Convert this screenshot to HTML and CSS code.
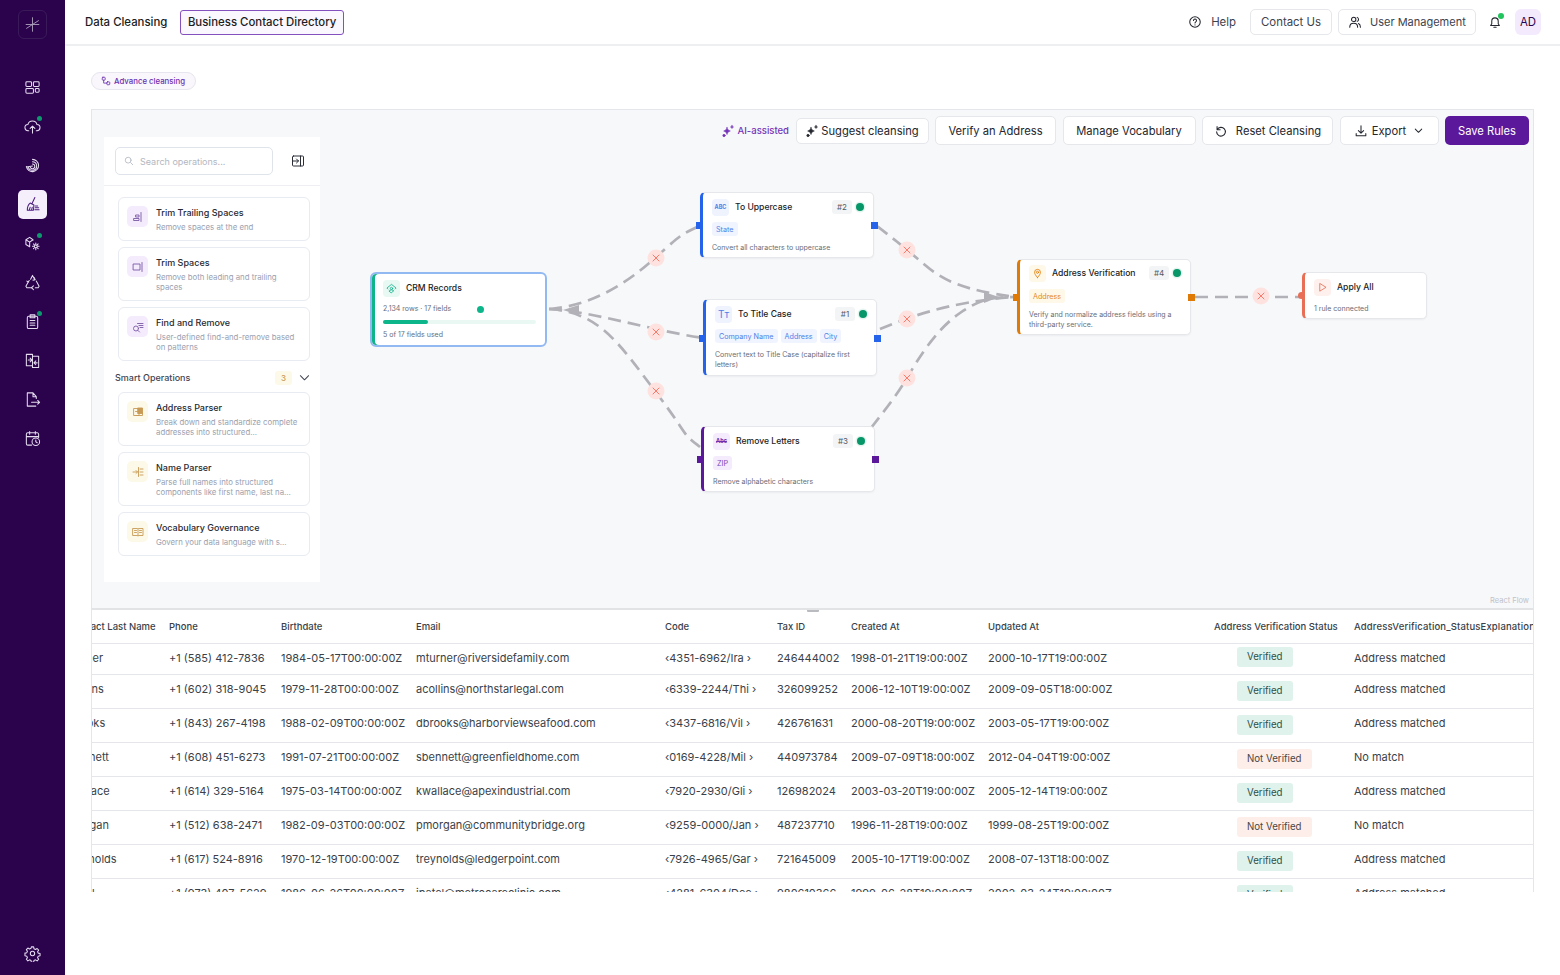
FILE: index.html
```html
<!DOCTYPE html>
<html lang="en">
<head>
    <meta charset="UTF-8">
    <title>Data Cleansing</title>
    <link rel="stylesheet" href="styles.css">
</head>
<body>
    <aside class="sidebar">
        <div class="logo">
            <svg viewBox="0 0 20 20" class="ico-logo"><path d="M10 2v16M3 14.5 17 5.500M2.500 10h15"/></svg>
        </div>
        <nav class="side-nav">
            <a class="side-item"><svg viewBox="0 0 18 18"><rect x="2" y="3" width="6" height="5" rx="1"/><rect x="10" y="3" width="6" height="5" rx="1"/><rect x="2" y="10" width="8" height="5" rx="1"/><rect x="12" y="10" width="4" height="4" rx="1"/></svg></a>
            <a class="side-item dot"><svg viewBox="0 0 18 18"><path d="M5 13.500H4.500a3.300 3.300 0 0 1-.4-6.600 5 5 0 0 1 9.700 0 3.300 3.300 0 0 1-.3 6.600H13"/><path d="M9 16V9M6.500 11 9 8.500l2.500 2.500"/></svg></a>
            <a class="side-item"><svg viewBox="0 0 18 18"><path d="M9 2.500a6.500 6.500 0 1 1-6.500 7.500M9 5a4.500 4.500 0 1 1-4.500 5.500M9 7.500a2.500 2.500 0 1 1-2.500 3M2.500 10.500 9 9.500"/></svg></a>
            <a class="side-item active"><svg viewBox="0 0 18 18"><path d="M11.500 1.500 8.500 8M6.500 7.500l4 2-.5 5.500H3.500c0-3 1-6 3-7.500zM5.500 15l1-3M8 15l.7-3M12 10.500h2.500M12 12.500h3.500M11.500 14.500H16"/></svg></a>
            <a class="side-item dot"><svg viewBox="0 0 18 18"><path d="M9.500 5.500V5L6 2.500 2 5v5l4 2.500M2 5l4 2.500L9.500 5M6 7.500v5"/><circle cx="12.500" cy="12" r="1.500"/><path d="M12.500 8.500v1.500M12.500 14v1.500M9 12h1.500M14.500 12H16M10 9.500l1 1M14 13.500l1 1M10 14.500l1-1M14 10.500l1-1"/></svg></a>
            <a class="side-item"><svg viewBox="0 0 18 18"><path d="M7 5.500 9 1.500l2.500 4.500M13 7.500l3 5.500-1 1.500h-3M8 14.500H3l-1-1.500 2.500-4.500"/><path d="m10 12.500-2 2 2 2M11 4l.7 2.200-2.200.3M3 7.500l1.500 1 1-1.700"/></svg></a>
            <a class="side-item dot"><svg viewBox="0 0 18 18"><rect x="3.500" y="3.500" width="11" height="13" rx="1.500"/><path d="M6.500 2h5v3h-5zM6.500 8h5M6.500 10.500h5M6.500 13h5"/></svg></a>
            <a class="side-item"><svg viewBox="0 0 18 18"><path d="M9 14.500H2.500v-12H9zM9 4.500h6.500v12H9zM4.500 8.500H8M6.500 6.500l2 2-2 2M14 11.500h-3.500M12.500 9.500l-2 2 2 2"/></svg></a>
            <a class="side-item"><svg viewBox="0 0 18 18"><path d="M13 8V6L9.500 2h-6v14h9M9.500 2v4H13M8 12h8.500M14.500 10l2 2-2 2"/></svg></a>
            <a class="side-item"><svg viewBox="0 0 18 18"><path d="M8 16H4a1.500 1.500 0 0 1-1.500-1.500v-10A1.500 1.500 0 0 1 4 3h10a1.500 1.500 0 0 1 1.500 1.500V8M6 1.500v3M12 1.500v3M2.500 7h13"/><circle cx="12.500" cy="12.500" r="4"/><path d="M12.500 10.500v2l1.500 1"/></svg></a>
        </nav>
        <a class="side-item gear"><svg viewBox="0 0 18 18"><circle cx="9" cy="9" r="2.300"/><path d="M7.800 2h2.400l.4 2 1.500.7 1.800-1 1.600 1.700-1.100 1.700.6 1.500 2 .5v2.400l-2 .4-.6 1.500 1.100 1.700-1.600 1.700-1.800-1.100-1.500.6-.4 2H7.800l-.4-2-1.500-.6-1.800 1.100-1.600-1.700 1.100-1.700-.6-1.500-2-.4V8.600l2-.5.6-1.500-1.100-1.700 1.600-1.700 1.800 1 1.500-.7z"/></svg></a>
    </aside>

    <div class="main">
        <header class="topbar">
            <span class="page-title">Data Cleansing</span>
            <span class="dataset-tag">Business Contact Directory</span>
            <div class="top-actions">
                <span class="help">
                    <svg viewBox="0 0 16 16" class="ico"><circle cx="8" cy="8" r="6"/><path d="M6.300 6.300a1.700 1.700 0 1 1 2.600 1.500c-.6.400-.9.700-.9 1.400M8 11.300v.2"/></svg>
                    Help
                </span>
                <span class="top-btn contact">Contact Us</span>
                <span class="top-btn users">
                    <svg viewBox="0 0 16 16" class="ico"><circle cx="6.500" cy="5" r="2.500"/><path d="M2 14c0-2.700 1.800-4.500 4.500-4.500S11 11.300 11 14M10.500 2.700a2.500 2.500 0 0 1 0 4.600M12 9.800c1.400.6 2.200 2.100 2.200 4.200"/></svg>
                    User Management
                </span>
                <span class="bell">
                    <svg viewBox="0 0 16 16" class="ico"><path d="M3 12h10l-1.300-2V7a3.700 3.700 0 0 0-7.400 0v3zM6.700 14h2.600"/></svg>
                </span>
                <span class="avatar">AD</span>
            </div>
        </header>

        <div class="content">
            <span class="mode-pill">
                <svg viewBox="0 0 12 12"><rect x="1.500" y="1.500" width="3.500" height="3.500" rx=".8"/><rect x="7" y="7" width="3.500" height="3.500" rx=".8"/><path d="M3.200 5v3.500H7"/></svg>
                Advance cleansing
            </span>

            <section class="canvas">
                <svg class="edges" viewBox="92 110 1441 497">
                    <g class="edge-lines">
                        <path d="M549 309C590 306 625 285 655 258S680 236 699 226"/>
                        <path d="M549 309C590 311 650 330 703 338"/>
                        <path d="M549 309C600 312 620 345 655 391S680 432 700 447"/>
                        <path d="M877 226C895 240 905 248 925 265S965 290 1015 297"/>
                        <path d="M880 329C905 319 945 302 1015 297"/>
                        <path d="M871 428C885 410 897 395 907 378S935 330 960 313 995 298 1015 297"/>
                        <path d="M1195 297H1302"/>
                    </g>
                    <polygon class="wedge" points="563,310 579,305 579,315"/>
                    <polygon class="wedge" points="999,297 984,292 984,303"/>
                    <g class="edge-x" transform="translate(656 258)"><circle r="8.500"/><path d="M-3-3 3 3M3-3-3 3"/></g>
                    <g class="edge-x" transform="translate(656 332)"><circle r="8.500"/><path d="M-3-3 3 3M3-3-3 3"/></g>
                    <g class="edge-x" transform="translate(656 391)"><circle r="8.500"/><path d="M-3-3 3 3M3-3-3 3"/></g>
                    <g class="edge-x" transform="translate(907 250)"><circle r="8.500"/><path d="M-3-3 3 3M3-3-3 3"/></g>
                    <g class="edge-x" transform="translate(907 319)"><circle r="8.500"/><path d="M-3-3 3 3M3-3-3 3"/></g>
                    <g class="edge-x" transform="translate(907 378)"><circle r="8.500"/><path d="M-3-3 3 3M3-3-3 3"/></g>
                    <g class="edge-x" transform="translate(1261 296)"><circle r="8.500"/><path d="M-3-3 3 3M3-3-3 3"/></g>
                </svg>

                <div class="toolbar">
                    <span class="ai-label">
                        <svg viewBox="0 0 14 14" class="spark"><path d="M6 3.500c.4 2 1.300 3 3.300 3.500-2 .4-2.900 1.500-3.300 3.500-.4-2-1.300-3.100-3.300-3.500 2-.5 2.900-1.500 3.300-3.500zM11 1.500c.2.900.6 1.300 1.500 1.500-.9.200-1.300.6-1.500 1.500-.2-.9-.6-1.300-1.500-1.500.9-.2 1.300-.6 1.500-1.500z"/><circle cx="3" cy="11.500" r="1.200"/></svg>
                        AI-assisted
                    </span>
                    <button class="tool-btn suggest">
                        <svg viewBox="0 0 14 14" class="spark dark"><path d="M6 3.500c.4 2 1.300 3 3.300 3.500-2 .4-2.900 1.500-3.300 3.500-.4-2-1.300-3.100-3.300-3.500 2-.5 2.900-1.500 3.300-3.500zM11 1.500c.2.900.6 1.300 1.500 1.500-.9.200-1.300.6-1.500 1.500-.2-.9-.6-1.300-1.500-1.500.9-.2 1.300-.6 1.500-1.500z"/><circle cx="3" cy="11.500" r="1.200"/></svg>
                        Suggest cleansing
                    </button>
                    <button class="tool-btn verify">Verify an Address</button>
                    <button class="tool-btn vocab">Manage Vocabulary</button>
                    <button class="tool-btn reset">
                        <svg viewBox="0 0 16 16" class="ico"><path d="M3.500 3v3.500H7M3.700 6.300A5 5 0 1 1 3 9"/></svg>
                        Reset Cleansing
                    </button>
                    <button class="tool-btn export">
                        <svg viewBox="0 0 16 16" class="ico"><path d="M8 2v8M5 7.500l3 3 3-3M2.500 11v2.500h11V11"/></svg>
                        Export
                        <svg viewBox="0 0 12 12" class="chev"><path d="m2.500 4.500 3.500 3.500 3.500-3.500"/></svg>
                    </button>
                    <button class="save-btn">Save Rules</button>
                </div>

                <div class="ops-panel">
                    <div class="ops-search">
                        <div class="search-box">
                            <svg viewBox="0 0 12 12"><circle cx="5" cy="5" r="3.500"/><path d="m8 8 2.500 2.500"/></svg>
                            <span>Search operations...</span>
                        </div>
                        <svg viewBox="0 0 14 14" class="collapse"><rect x="1.500" y="2" width="11" height="10" rx="1"/><path d="M9.500 2v10M1.500 7h6M5.500 5l2 2-2 2"/></svg>
                    </div>
                    <div class="ops-list">
                        <div class="op-card">
                            <span class="op-icon lilac"><svg viewBox="0 0 12 12"><path d="M9 1.500v9M2 7.500h5v2H2zM4 4h3v2H4z"/></svg></span>
                            <div class="op-text"><h4>Trim Trailing Spaces</h4><p>Remove spaces at the end</p></div>
                        </div>
                        <div class="op-card">
                            <span class="op-icon lilac"><svg viewBox="0 0 12 12"><rect x="1.500" y="3" width="6.500" height="6"/><path d="M10 1.500v9"/></svg></span>
                            <div class="op-text"><h4>Trim Spaces</h4><p>Remove both leading and trailing spaces</p></div>
                        </div>
                        <div class="op-card">
                            <span class="op-icon lilac"><svg viewBox="0 0 12 12"><circle cx="4" cy="7.500" r="2.500"/><path d="m6 9.500 1.500 1.500M5.500 2.500H11M7 4.500h4M8 6.500h3"/></svg></span>
                            <div class="op-text"><h4>Find and Remove</h4><p>User-defined find-and-remove based on patterns</p></div>
                        </div>
                        <div class="smart-head">
                            <span class="smart-title">Smart Operations</span>
                            <span class="smart-count">3</span>
                            <svg viewBox="0 0 12 12" class="chev"><path d="m1.500 4 4.500 4.500L10.500 4"/></svg>
                        </div>
                        <div class="op-card">
                            <span class="op-icon sand"><svg viewBox="0 0 12 12"><path d="M2 2.500h5v7H2z"/><path class="fill" d="M6 2h4.500v5.500H6z"/><path d="M3.500 5.500h2M4 9.500h6.500V7"/></svg></span>
                            <div class="op-text"><h4>Address Parser</h4><p>Break down and standardize complete addresses into structured...</p></div>
                        </div>
                        <div class="op-card">
                            <span class="op-icon sand"><svg viewBox="0 0 12 12"><path d="M1 6h4.500M4 4.500 5.500 6 4 7.500M6.500 1.500v9M8 3h3M8 6h3M8 9h3"/></svg></span>
                            <div class="op-text"><h4>Name Parser</h4><p>Parse full names into structured components like first name, last na...</p></div>
                        </div>
                        <div class="op-card">
                            <span class="op-icon sand"><svg viewBox="0 0 12 12"><path d="M1 2.500h4.500L6 3l.5-.5H11v7H6.500L6 10l-.5-.5H1zM6 3v7M2.500 4.500h2M2.500 6.500h2M7.500 4.500h2M7.500 6.500h2"/></svg></span>
                            <div class="op-text"><h4>Vocabulary Governance</h4><p>Govern your data language with s...</p></div>
                        </div>
                    </div>
                </div>

                <div class="node node-crm">
                    <div class="node-head">
                        <span class="node-icon mint"><svg viewBox="0 0 12 12"><path d="M2 6.500 1 5.500 6 1.500l5 4-1 1M3.500 8.500a3.500 3.500 0 0 1 5 0L6 10.500z"/><circle cx="6" cy="6" r="1.300"/></svg></span>
                        <span class="node-title">CRM Records</span>
                    </div>
                    <div class="crm-meta"><span>2,134 rows · 17 fields</span><i class="crm-dot"></i></div>
                    <div class="crm-bar"><i></i></div>
                    <p class="node-desc">5 of 17 fields used</p>
                </div>

                <div class="node node-upper blue">
                    <div class="node-head">
                        <span class="node-icon pale-blue glyph-abc">ABC</span>
                        <span class="node-title">To Uppercase</span>
                        <span class="node-num">#2</span>
                        <i class="status-dot"></i>
                    </div>
                    <div class="chips"><span class="chip chip-blue">State</span></div>
                    <p class="node-desc">Convert all characters to uppercase</p>
                    <i class="handle left"></i><i class="handle right"></i>
                </div>

                <div class="node node-title-case blue">
                    <div class="node-head">
                        <span class="node-icon pale-blue glyph-tt">Tт</span>
                        <span class="node-title">To Title Case</span>
                        <span class="node-num">#1</span>
                        <i class="status-dot"></i>
                    </div>
                    <div class="chips"><span class="chip chip-blue">Company Name</span><span class="chip chip-blue">Address</span><span class="chip chip-blue">City</span></div>
                    <p class="node-desc">Convert text to Title Case (capitalize first letters)</p>
                    <i class="handle left"></i><i class="handle right"></i>
                </div>

                <div class="node node-remove purple">
                    <div class="node-head">
                        <span class="node-icon pale-purple glyph-abc struck">Abc</span>
                        <span class="node-title">Remove Letters</span>
                        <span class="node-num">#3</span>
                        <i class="status-dot"></i>
                    </div>
                    <div class="chips"><span class="chip chip-purple">ZIP</span></div>
                    <p class="node-desc">Remove alphabetic characters</p>
                    <i class="handle left"></i><i class="handle right"></i>
                </div>

                <div class="node node-address orange">
                    <div class="node-head">
                        <span class="node-icon pale-sand"><svg viewBox="0 0 12 12"><path d="M6 10.500C4 8 2.800 6.500 2.800 4.700a3.200 3.200 0 0 1 6.400 0C9.200 6.500 8 8 6 10.500z"/><circle cx="6" cy="4.700" r="1.200"/></svg></span>
                        <span class="node-title">Address Verification</span>
                        <span class="node-num">#4</span>
                        <i class="status-dot"></i>
                    </div>
                    <div class="chips"><span class="chip chip-orange">Address</span></div>
                    <p class="node-desc">Verify and normalize address fields using a third-party service.</p>
                    <i class="handle left"></i><i class="handle right"></i>
                </div>

                <div class="node node-apply coral">
                    <div class="node-head">
                        <span class="node-icon pale-coral"><svg viewBox="0 0 12 12"><path d="M3 2v8l6.500-4z"/></svg></span>
                        <span class="node-title">Apply All</span>
                    </div>
                    <p class="node-desc">1 rule connected</p>
                    <i class="handle left round"></i>
                </div>

                <span class="attribution">React Flow</span>
            </section>

            <section class="table-wrap">
                <i class="grip"></i>
                <table class="data-table">
                    <colgroup>
                        <col class="c-name"><col class="c-phone"><col class="c-birth"><col class="c-email"><col class="c-code">
                        <col class="c-tax"><col class="c-created"><col class="c-updated"><col class="c-status"><col class="c-expl">
                    </colgroup>
                    <thead>
                        <tr><th>Contact Last Name</th><th>Phone</th><th>Birthdate</th><th>Email</th><th>Code</th><th>Tax ID</th><th>Created At</th><th>Updated At</th><th>Address Verification Status</th><th>AddressVerification_StatusExplanation</th></tr>
                    </thead>
                    <tbody>
                        <tr class="row-first"><td>Turner</td><td>+1 (585) 412-7836</td><td>1984-05-17T00:00:00Z</td><td>mturner@riversidefamily.com</td><td>‹4351-6962/Ira ›</td><td>246444002</td><td>1998-01-21T19:00:00Z</td><td>2000-10-17T19:00:00Z</td><td class="cell-status"><span class="badge ok">Verified</span></td><td>Address matched</td></tr>
                        <tr><td>Collins</td><td>+1 (602) 318-9045</td><td>1979-11-28T00:00:00Z</td><td>acollins@northstarlegal.com</td><td>‹6339-2244/Thi ›</td><td>326099252</td><td>2006-12-10T19:00:00Z</td><td>2009-09-05T18:00:00Z</td><td class="cell-status"><span class="badge ok">Verified</span></td><td>Address matched</td></tr>
                        <tr><td>Brooks</td><td>+1 (843) 267-4198</td><td>1988-02-09T00:00:00Z</td><td>dbrooks@harborviewseafood.com</td><td>‹3437-6816/Vil ›</td><td>426761631</td><td>2000-08-20T19:00:00Z</td><td>2003-05-17T19:00:00Z</td><td class="cell-status"><span class="badge ok">Verified</span></td><td>Address matched</td></tr>
                        <tr><td>Bennett</td><td>+1 (608) 451-6273</td><td>1991-07-21T00:00:00Z</td><td>sbennett@greenfieldhome.com</td><td>‹0169-4228/Mil ›</td><td>440973784</td><td>2009-07-09T18:00:00Z</td><td>2012-04-04T19:00:00Z</td><td class="cell-status"><span class="badge no">Not Verified</span></td><td>No match</td></tr>
                        <tr><td>Wallace</td><td>+1 (614) 329-5164</td><td>1975-03-14T00:00:00Z</td><td>kwallace@apexindustrial.com</td><td>‹7920-2930/Gli ›</td><td>126982024</td><td>2003-03-20T19:00:00Z</td><td>2005-12-14T19:00:00Z</td><td class="cell-status"><span class="badge ok">Verified</span></td><td>Address matched</td></tr>
                        <tr><td>Morgan</td><td>+1 (512) 638-2471</td><td>1982-09-03T00:00:00Z</td><td>pmorgan@communitybridge.org</td><td>‹9259-0000/Jan ›</td><td>487237710</td><td>1996-11-28T19:00:00Z</td><td>1999-08-25T19:00:00Z</td><td class="cell-status"><span class="badge no">Not Verified</span></td><td>No match</td></tr>
                        <tr><td>Reynolds</td><td>+1 (617) 524-8916</td><td>1970-12-19T00:00:00Z</td><td>treynolds@ledgerpoint.com</td><td>‹7926-4965/Gar ›</td><td>721645009</td><td>2005-10-17T19:00:00Z</td><td>2008-07-13T18:00:00Z</td><td class="cell-status"><span class="badge ok">Verified</span></td><td>Address matched</td></tr>
                        <tr><td>Patel</td><td>+1 (973) 407-5629</td><td>1986-06-26T00:00:00Z</td><td>jpatel@metrocareclinic.com</td><td>‹4281-6304/Dee ›</td><td>980610366</td><td>1999-06-28T19:00:00Z</td><td>2002-03-24T19:00:00Z</td><td class="cell-status"><span class="badge ok">Verified</span></td><td>Address matched</td></tr>
                    </tbody>
                </table>
            </section>
        </div>
    </div>
</body>
</html>
```

FILE: styles.css
```css
* {
    box-sizing: border-box;
}

body {
    margin: 0;
    height: 975px;
    overflow: hidden;
    display: flex;
    background-color: #ffffff;
    color: #1f2430;
    font-family: Inter, "Noto Sans", sans-serif;
}

svg {
    fill: none;
    stroke: currentColor;
    stroke-linecap: round;
    stroke-linejoin: round;
}

h4,
p {
    margin: 0;
}

/* Sidebar */
.sidebar {
    width: 65px;
    flex: none;
    display: flex;
    flex-direction: column;
    align-items: center;
    padding: 10px 0 7px;
    background-color: #2b034c;
}

.logo {
    width: 29px;
    height: 29px;
    display: flex;
    align-items: center;
    justify-content: center;
    border: 1px solid #3b1a5a;
    border-radius: 6px;
    color: #a99cb9;
}

.ico-logo {
    width: 17px;
    height: 17px;
    stroke-width: 1.1;
}

.side-nav {
    display: flex;
    flex-direction: column;
    gap: 10px;
    margin-top: 34px;
}

.side-item {
    position: relative;
    width: 29px;
    height: 29px;
    display: flex;
    align-items: center;
    justify-content: center;
    border-radius: 5px;
    color: #e6dcf0;
}

.side-item svg {
    width: 17px;
    height: 17px;
    stroke-width: 1.1;
}

.side-item.active {
    background-color: #f5effc;
    color: #4c1d80;
}

.side-item.dot::after {
    content: "";
    position: absolute;
    top: 4px;
    right: 5px;
    width: 5px;
    height: 5px;
    border-radius: 50%;
    background-color: #0c9a6c;
}

.gear {
    margin-top: auto;
}

/* Top bar */
.main {
    flex: 1;
    min-width: 0;
    display: flex;
    flex-direction: column;
}

.topbar {
    height: 46px;
    flex: none;
    display: flex;
    align-items: center;
    padding: 0 19px 0 20px;
    border-bottom: 2px solid #eeeff1;
    font-size: 11.4px;
    font-weight: 500;
}

.page-title {
    margin-right: 13px;
    color: #1b1d24;
}

.dataset-tag {
    height: 25px;
    display: flex;
    align-items: center;
    padding: 0 6.5px;
    border: 1px solid #8450bd;
    border-radius: 3px;
    background-color: #fbf7ff;
    color: #1b1d24;
}

.top-actions {
    margin-left: auto;
    display: flex;
    align-items: center;
    color: #3d424d;
    font-weight: 400;
}

.ico {
    width: 14px;
    height: 14px;
    stroke-width: 1.2;
    flex: none;
    color: #23262e;
}

.help {
    display: flex;
    align-items: center;
    gap: 9px;
    margin-right: 14px;
}

.top-btn {
    height: 26px;
    display: flex;
    align-items: center;
    border: 1px solid #e6e7ea;
    border-radius: 5px;
    background-color: #ffffff;
}

.contact {
    width: 82px;
    justify-content: center;
    margin-right: 6px;
}

.users {
    width: 138px;
    gap: 8px;
    padding-left: 9px;
    font-size: 11px;
}

.bell {
    position: relative;
    width: 14px;
    height: 14px;
    margin: 0 13px 0 12px;
    color: #23262e;
}

.bell::after {
    content: "";
    position: absolute;
    top: -2px;
    right: -2px;
    width: 6px;
    height: 6px;
    border-radius: 50%;
    background-color: #21c45d;
}

.avatar {
    width: 26px;
    height: 26px;
    display: flex;
    align-items: center;
    justify-content: center;
    border-radius: 6px;
    background-color: #f4eafd;
    color: #2b034c;
}

/* Content */
.content {
    flex: 1;
    padding: 26px 26px 0;
}

.mode-pill {
    width: 105px;
    height: 18px;
    display: flex;
    align-items: center;
    gap: 3px;
    padding-left: 9px;
    border: 1px solid #e7e5ee;
    border-radius: 9px;
    background-color: #f9f7fc;
    color: #6b2fb0;
    font-size: 7.8px;
    font-weight: 500;
    white-space: nowrap;
}

.mode-pill svg {
    width: 10px;
    height: 10px;
    stroke-width: 1;
}

.canvas {
    position: relative;
    height: 499px;
    margin-top: 19px;
    border: 1px solid #e4e6ea;
    border-bottom: 0;
    background-color: #f7f8fa;
}

.edges {
    position: absolute;
    left: 0;
    top: 0;
    width: 1441px;
    height: 497px;
}

.edge-lines path {
    stroke: #b1b1b7;
    stroke-width: 2.7;
    stroke-dasharray: 13 7;
    stroke-linecap: butt;
}

.wedge {
    fill: #b1b1b7;
    stroke: none;
}

.edge-x circle {
    fill: #fee2e0;
    stroke: none;
}

.edge-x path {
    stroke: #f87b6c;
    stroke-width: 1;
}

/* Toolbar */
.toolbar {
    position: absolute;
    top: 6px;
    right: 4px;
    display: flex;
    align-items: center;
    gap: 6.5px;
}

.ai-label {
    display: flex;
    align-items: center;
    gap: 3px;
    color: #7434b8;
    font-size: 9.5px;
    font-weight: 500;
}

.spark {
    width: 14px;
    height: 14px;
    stroke-width: .6;
    fill: #7434b8;
    color: #7434b8;
    flex: none;
}

.spark.dark {
    fill: #23262e;
    color: #23262e;
}

.tool-btn,
.save-btn {
    height: 29px;
    display: flex;
    align-items: center;
    justify-content: center;
    padding: 0;
    border: 1px solid #e6e7ea;
    border-radius: 5px;
    background-color: #ffffff;
    color: #23262e;
    font-family: inherit;
    font-size: 11.2px;
    font-weight: 400;
    white-space: nowrap;
}

.suggest {
    width: 133px;
    height: 26px;
    gap: 2px;
}

.verify {
    width: 121px;
}

.vocab {
    width: 133px;
}

.reset {
    width: 131px;
    gap: 8px;
}

.export {
    width: 99px;
    gap: 4px;
}

.chev {
    width: 11px;
    height: 11px;
    stroke-width: 1.1;
    margin-left: 3px;
}

.save-btn {
    width: 84px;
    border: 0;
    background-color: #5b189b;
    color: #ffffff;
}

/* Operations panel */
.ops-panel {
    position: absolute;
    left: 12px;
    top: 27px;
    width: 216px;
    height: 445px;
    background-color: #ffffff;
}

.ops-search {
    height: 49px;
    display: flex;
    align-items: center;
    gap: 18px;
    padding: 0 11px;
    border-bottom: 1px solid #edeff2;
}

.search-box {
    width: 158px;
    height: 28px;
    display: flex;
    align-items: center;
    gap: 6px;
    padding-left: 8px;
    border: 1px solid #dfe3ea;
    border-radius: 5px;
    color: #b2b7c2;
    font-size: 9px;
}

.search-box svg {
    width: 10px;
    height: 10px;
    stroke-width: 1;
}

.collapse {
    width: 14px;
    height: 14px;
    stroke-width: 1;
    color: #2b2e36;
}

.ops-list {
    display: flex;
    flex-direction: column;
    gap: 6px;
    padding: 11px 10px 0 14px;
}

.op-card {
    display: flex;
    gap: 8px;
    padding: 7px 8px 8px;
    border: 1px solid #e8ebf1;
    border-radius: 6px;
}

.op-icon {
    width: 21px;
    height: 21px;
    margin-top: 1px;
    flex: none;
    display: flex;
    align-items: center;
    justify-content: center;
    border-radius: 5px;
}

.op-icon svg {
    width: 12px;
    height: 12px;
    stroke-width: .9;
}

.op-icon.lilac {
    background-color: #f4ebfd;
    color: #7a5aa5;
}

.op-icon.sand {
    background-color: #fdf9e8;
    color: #c79a55;
}

.op-icon .fill {
    fill: #c79a55;
}

.op-text h4 {
    margin-top: 1px;
    font-size: 9px;
    font-weight: 500;
    line-height: 13px;
    color: #272a33;
}

.op-text p {
    margin-top: 3px;
    font-size: 7.8px;
    line-height: 10px;
    color: #9aa1b0;
}

.smart-head {
    display: flex;
    align-items: center;
    height: 19px;
    flex: none;
    margin: 1px 0 -1px -3px;
    color: #3f4552;
    font-size: 9px;
    font-weight: 500;
}

.smart-title {
    flex: 1;
}

.smart-count {
    width: 17px;
    height: 14px;
    display: flex;
    align-items: center;
    justify-content: center;
    margin-right: 7px;
    border-radius: 3px;
    background-color: #fdf9e8;
    color: #c79a55;
    font-size: 8px;
}

.smart-head .chev {
    margin: 0;
}

/* Flow nodes */
.node {
    position: absolute;
    width: 174px;
    padding: 5px 9px 0 9px;
    border: 1px solid #e6e7ea;
    border-left-width: 3px;
    border-radius: 5px;
    background-color: #ffffff;
    box-shadow: 0 1px 2px rgba(20, 24, 40, .05);
}

.node.blue {
    border-left-color: #2563eb;
}

.node.purple {
    border-left-color: #5b189b;
}

.node.orange {
    border-left-color: #df7a06;
}

.node.coral {
    border-left-color: #e86f55;
}

.node-crm {
    left: 278px;
    top: 162px;
    width: 177px;
    height: 75px;
    padding: 5px 9px 0 11px;
    border: 2px solid #93b9f2;
    border-radius: 6px;
    box-shadow: inset 3px 0 0 #10b48a;
}

.node-upper {
    left: 608px;
    top: 82px;
    height: 66px;
}

.node-title-case {
    left: 611px;
    top: 189px;
    height: 77px;
}

.node-remove {
    left: 609px;
    top: 316px;
    height: 66px;
}

.node-address {
    left: 925px;
    top: 149px;
    height: 76px;
    padding-top: 4px;
}

.node-apply {
    left: 1210px;
    top: 162px;
    width: 125px;
    height: 47px;
}

.node-head {
    display: flex;
    align-items: center;
    height: 18px;
}

.node-icon {
    width: 17px;
    height: 17px;
    flex: none;
    display: flex;
    align-items: center;
    justify-content: center;
    margin-right: 6px;
    border-radius: 4px;
}

.node-icon svg {
    width: 11px;
    height: 11px;
    stroke-width: .9;
}

.glyph-abc {
    font-size: 5.5px;
    font-weight: 700;
}

.glyph-abc.struck {
    text-decoration: line-through;
}

.glyph-tt {
    font-size: 10px;
}

.mint {
    background-color: #e8f8f3;
    color: #10b48a;
}

.pale-blue {
    background-color: #eef3fe;
    color: #4f7fe8;
}

.pale-purple {
    background-color: #f4ebfd;
    color: #6b2fb0;
}

.pale-sand {
    background-color: #fef8e9;
    color: #df7a06;
}

.pale-coral {
    background-color: #fdf0ed;
    color: #e86f55;
}

.node-title {
    flex: 1;
    font-size: 8.6px;
    font-weight: 500;
    color: #1b1d24;
    white-space: nowrap;
}

.node-num {
    width: 20px;
    height: 14px;
    display: flex;
    align-items: center;
    justify-content: center;
    margin-right: 4px;
    border-radius: 3px;
    background-color: #f3f4f5;
    color: #555a64;
    font-size: 8px;
}

.status-dot {
    width: 8px;
    height: 8px;
    border-radius: 50%;
    background-color: #069668;
    box-shadow: 0 0 0 1.5px #e4f5ef;
}

.chips {
    display: flex;
    gap: 3px;
    margin-top: 6px;
}

.node-address .chips {
    margin-top: 7px;
}

.chip {
    height: 14px;
    display: flex;
    align-items: center;
    padding: 0 4px;
    border-radius: 3px;
    font-size: 7.2px;
}

.chip-blue {
    background-color: #eff4fe;
    color: #4f7fe8;
}

.chip-purple {
    background-color: #f4ebfd;
    color: #7a47b5;
}

.chip-orange {
    background-color: #fef8e9;
    color: #e58a1e;
}

.node-desc {
    margin-top: 7px;
    font-size: 7px;
    line-height: 10px;
    color: #686d78;
}

.crm-meta {
    position: relative;
    margin-top: 7px;
    height: 12px;
    font-size: 7px;
    line-height: 10px;
    color: #686d78;
}

.crm-dot {
    position: absolute;
    left: 94px;
    top: 2px;
    width: 7px;
    height: 7px;
    border-radius: 50%;
    background-color: #0cb58a;
}

.crm-bar {
    height: 4px;
    margin-top: 4px;
    border-radius: 2px;
    background-color: #e9f8f3;
}

.crm-bar i {
    display: block;
    width: 45px;
    height: 4px;
    border-radius: 2px;
    background-color: #0cb58a;
}

.node-crm .node-desc {
    margin-top: 6px;
}

.node-apply .node-desc {
    margin-top: 8px;
}

.handle {
    position: absolute;
    top: 29px;
    width: 7px;
    height: 7px;
    background-color: #2563eb;
}

.handle.left {
    left: -7px;
}

.handle.right {
    right: -4.5px;
}

.purple .handle {
    background-color: #5b189b;
}

.orange .handle {
    background-color: #df7a06;
}

.node-title-case .handle {
    top: 35px;
}

.node-remove .handle {
    top: 29px;
}

.node-address .handle {
    top: 34px;
}

.handle.round {
    top: 19px;
    border-radius: 50%;
    background-color: #e86f55;
}

.attribution {
    position: absolute;
    right: 2px;
    bottom: 2px;
    padding: 1px 2px;
    color: #bfc2c8;
    font-size: 7.5px;
}

/* Data table */
.table-wrap {
    position: relative;
    height: 284px;
    overflow: hidden;
    border: 1px solid #e4e6ea;
    border-width: 0 1px;
    border-top: 2px solid #e2e3e5;
}

.grip {
    position: absolute;
    left: 715px;
    top: -2px;
    width: 12px;
    height: 4px;
    border-radius: 1px;
    background-color: #b9bbc0;
}

.data-table {
    width: 1505px;
    margin-left: -23px;
    table-layout: fixed;
    border-collapse: collapse;
    font-size: 11px;
    color: #3a3f49;
    white-space: nowrap;
}

.c-name { width: 100px; }
.c-phone { width: 112px; }
.c-birth { width: 135px; }
.c-email { width: 249px; }
.c-code { width: 112px; }
.c-tax { width: 74px; }
.c-created { width: 137px; }
.c-updated { width: 226px; }
.c-status { width: 140px; }
.c-expl { width: 220px; }

.data-table th {
    height: 33px;
    padding: 0;
    border-bottom: 1px solid #e4e6ea;
    font-size: 9.5px;
    font-weight: 500;
    text-align: left;
    color: #3a3f49;
}

.data-table th:last-child {
    letter-spacing: .15px;
}

.data-table td {
    height: 34px;
    padding: 7px 0 0;
    border-bottom: 1px solid #e4e6ea;
    vertical-align: top;
    line-height: 14px;
}

.data-table .row-first td {
    height: 31px;
}

.data-table td.cell-status {
    padding: 6px 0 0 23px;
}

.data-table .row-first td.cell-status {
    padding-top: 3px;
}

.badge {
    display: inline-block;
    height: 20px;
    padding: 0 10px;
    border-radius: 3px;
    font-size: 9.7px;
    line-height: 20px;
}

.badge.ok {
    background-color: #dff2ec;
    color: #2f4f49;
}

.badge.no {
    background-color: #fdeeea;
    color: #4a4644;
}
```
